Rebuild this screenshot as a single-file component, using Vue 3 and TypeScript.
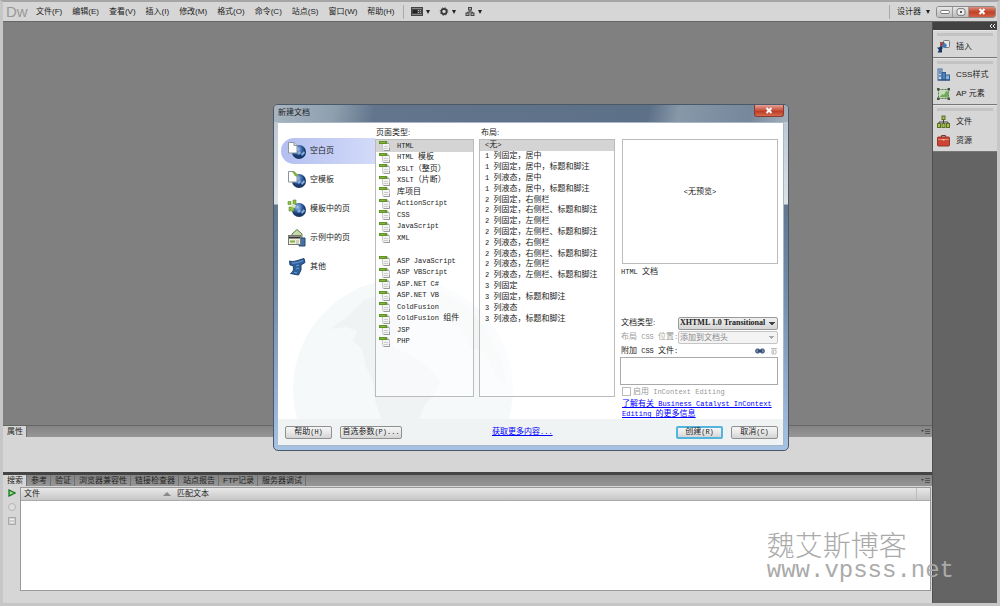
<script setup lang="ts">
import { ref, defineComponent, h } from 'vue'

// Sets half-width latin runs in a narrow monospace beside full-width characters.
const Mixed = defineComponent({
  props: { text: { type: String, required: true } },
  setup(props) {
    return () =>
      h(
        'span',
        { class: 'mixed' },
        (props.text.match(/[\x20-\x7e]+|[^\x20-\x7e]+/g) ?? []).map((run) =>
          /^[\x20-\x7e]/.test(run) ? h('span', { class: 'half' }, run) : run,
        ),
      )
  },
})

const menus = ['文件(F)', '编辑(E)', '查看(V)', '插入(I)', '修改(M)', '格式(O)', '命令(C)', '站点(S)', '窗口(W)', '帮助(H)']
const dock = [
  [{ icon: 'insert', label: '插入' }],
  [{ icon: 'css', label: 'CSS样式' }, { icon: 'ap', label: 'AP 元素' }],
  [{ icon: 'files', label: '文件' }, { icon: 'assets', label: '资源' }],
]
const categories = ['空白页', '空模板', '模板中的页', '示例中的页', '其他']
const pageTypes = [
  'HTML', 'HTML 模板', 'XSLT（整页）', 'XSLT（片断）', '库项目', 'ActionScript', 'CSS', 'JavaScript', 'XML', '',
  'ASP JavaScript', 'ASP VBScript', 'ASP.NET C#', 'ASP.NET VB', 'ColdFusion', 'ColdFusion 组件', 'JSP', 'PHP',
]
const layouts = [
  '<无>', '1 列固定，居中', '1 列固定，居中，标题和脚注', '1 列液态，居中', '1 列液态，居中，标题和脚注',
  '2 列固定，右侧栏', '2 列固定，右侧栏、标题和脚注', '2 列固定，左侧栏', '2 列固定，左侧栏、标题和脚注',
  '2 列液态，右侧栏', '2 列液态，右侧栏、标题和脚注', '2 列液态，左侧栏', '2 列液态，左侧栏、标题和脚注',
  '3 列固定', '3 列固定，标题和脚注', '3 列液态', '3 列液态，标题和脚注',
]
const resultTabs = ['搜索', '参考', '验证', '浏览器兼容性', '链接检查器', '站点报告', 'FTP记录', '服务器调试']

const category = ref(0)
const pageType = ref(0)
const layout = ref(0)
const tab = ref(0)
</script>

<template>
  <div class="app">
    <header class="menubar">
      <span class="logo">Dw</span>
      <nav class="menus">
        <button v-for="m in menus" :key="m" type="button">{{ m }}</button>
      </nav>
      <i class="sep"></i>
      <button class="tool" type="button" aria-label="布局">
        <svg width="12" height="9" viewBox="0 0 12 9"><rect width="12" height="9" fill="#444" /><path d="M1 1.500h10M1 7.500h10" stroke="#888" /><rect x="2" y="3" width="4" height="3" fill="#222" /><path d="M7 3.500h1M9 3.500h1M7 5.500h1M9 5.500h1" stroke="#bbb" /></svg>
        <i class="caret"></i>
      </button>
      <button class="tool" type="button" aria-label="扩展">
        <svg width="10" height="9" viewBox="0 0 10 9"><circle cx="5" cy="4.500" r="2.600" fill="none" stroke="#333" stroke-width="1.700" /><circle cx="5" cy="4.500" r="3.800" fill="none" stroke="#444" stroke-dasharray="1.300 1.700" /></svg>
        <i class="caret"></i>
      </button>
      <button class="tool" type="button" aria-label="站点">
        <svg width="10" height="9" viewBox="0 0 10 9" fill="#aaa" stroke="#444"><rect x="3.500" y=".5" width="3" height="2.500" /><path d="M5 3v2M2.500 6V5h5v1" fill="none" /><rect x="1" y="6" width="3" height="2.500" /><rect x="6" y="6" width="3" height="2.500" /></svg>
        <i class="caret"></i>
      </button>
      <i class="sep push"></i>
      <button class="workspace-switch" type="button">设计器 <i class="caret"></i></button>
      <div class="winctl">
        <button type="button" aria-label="最小化"><svg width="10" height="6" viewBox="0 0 10 6"><rect x=".7" y="1.500" width="8.600" height="3" rx="1" fill="#fff" stroke="#777" /></svg></button>
        <button type="button" aria-label="还原"><svg width="10" height="8" viewBox="0 0 10 8"><rect x="1" y=".7" width="8" height="6.600" rx="2" fill="#eee" stroke="#777" /><rect x="4" y="3" width="2" height="2" fill="#555" /></svg></button>
        <button type="button" class="close" aria-label="关闭"><svg width="8" height="7" viewBox="0 0 8 7"><path d="M1.500 1l5 5M6.500 1l-5 5" stroke="#fff" stroke-width="2" /></svg></button>
      </div>
    </header>

    <div class="main">
      <div class="left">
        <div class="canvas"></div>
        <section class="properties">
          <div class="tabs">
            <button class="tab on" type="button">属性</button>
            <svg class="opts" width="10" height="7" viewBox="0 0 10 7"><path d="M0 2h3L1.500 4z" fill="#444" /><path d="M4 1.500h5M4 3.500h5M4 5.500h5" stroke="#555" /></svg>
          </div>
        </section>
        <section class="results">
          <div class="tabs">
            <button v-for="(t, i) in resultTabs" :key="t" class="tab" :class="{ on: tab === i }" type="button" @click="tab = i">{{ t }}</button>
            <svg class="opts" width="10" height="7" viewBox="0 0 10 7"><path d="M0 2h3L1.500 4z" fill="#444" /><path d="M4 1.500h5M4 3.500h5M4 5.500h5" stroke="#555" /></svg>
          </div>
          <div class="result-body">
            <div class="strip">
              <button type="button" aria-label="运行"><svg width="8" height="8" viewBox="0 0 8 8"><path d="M1 1l6 3-6 3z" fill="#9adb8c" stroke="#16751b" stroke-width="1.300" /></svg></button>
              <button type="button" aria-label="停止"><svg width="8" height="8" viewBox="0 0 8 8"><circle cx="4" cy="4" r="3.500" fill="#ddd" stroke="#b5b5b5" /></svg></button>
              <button type="button" aria-label="保存"><svg width="8" height="8" viewBox="0 0 8 8"><rect x=".5" y=".5" width="7" height="7" fill="#ccc" stroke="#aaa" /><path d="M2 2.500h4M2.500 5.500h3" stroke="#f4f4f4" /></svg></button>
            </div>
            <div class="grid">
              <table>
                <thead>
                  <tr>
                    <th class="file">文件<svg width="8" height="4" viewBox="0 0 8 4"><path d="M0 4l4-4 4 4z" fill="#888" /></svg></th>
                    <th>匹配文本</th>
                    <th class="end"></th>
                  </tr>
                </thead>
              </table>
            </div>
          </div>
        </section>
      </div>

      <aside class="dock">
        <div class="dock-head"><svg width="6" height="4" viewBox="0 0 6 4"><path d="M3 0L1 2l2 2M6 0L4 2l2 2" fill="none" stroke="#eee" /></svg></div>
        <div v-for="(group, g) in dock" :key="g" class="group">
          <i class="grip"></i>
          <button v-for="p in group" :key="p.label" type="button">
            <svg width="13" height="13" viewBox="0 0 13 13">
              <g v-if="p.icon === 'insert'"><rect x="6.500" y=".5" width="6" height="7" rx="1" fill="#e8e8e8" stroke="#777" /><rect x="3.500" y="2.500" width="3.500" height="4" fill="#c8341f" stroke="#444" stroke-width=".5" /><circle cx="7.500" cy="5.500" r="2.200" fill="#3a7cc4" /><path d="M0 7.500h2L4 6l2 2-1 1v3.500H.5L2 10z" fill="#17395f" /></g>
              <g v-else-if="p.icon === 'css'"><rect x="1" y="1" width="4" height="11" fill="#c3d4ea" stroke="#426b9d" /><rect x="5" y="4.500" width="3.500" height="7.500" fill="#4c81bb" stroke="#315f93" /><rect x="8.500" y="7" width="4" height="5" fill="#8cb0d9" stroke="#315f93" /><path d="M1 12h12M2 3h2M2 5h2M2 8h2" stroke="#254b7a" /></g>
              <g v-else-if="p.icon === 'ap'"><rect x="1.500" y="2.500" width="10" height="9" fill="#c4dfb5" stroke="#666" stroke-dasharray="2 1" /><path d="M2.500 10l3-3 1.500 1 2-4 2.500 1v5.500z" fill="#71a95c" /><path d="M0 1h2.500v2.500H0zM10.500 1H13v2.500h-2.500zM0 10.500h2.500V13H0zM10.500 10.500H13V13h-2.500z" fill="#41583c" /></g>
              <g v-else-if="p.icon === 'files'" stroke="#596e28" fill="#a9bf45"><path d="M6.500 4v3M2 9V7h9v2M6.500 7v2" fill="none" stroke="#444" /><rect x="5" y="1" width="3" height="3.500" /><rect x=".5" y="8.500" width="3" height="4" /><rect x="5" y="8.500" width="3" height="4" /><rect x="9.500" y="8.500" width="3" height="4" /></g>
              <g v-else><path d="M4.500 3V1.500h4V3" fill="none" stroke="#7d342a" /><rect x=".5" y="3" width="12" height="9" rx="1" fill="#cb4434" stroke="#96352a" /><path d="M1 5.500h11" stroke="#e58672" /><path d="M5.500 5h2v1.500h-2z" fill="#f4c3ae" /></g>
            </svg>
            <span>{{ p.label }}</span>
          </button>
        </div>
      </aside>
    </div>

    <div class="dialog" role="dialog" aria-labelledby="dlg-title">
      <div class="title">
        <span id="dlg-title">新建文档</span>
        <button type="button" class="dlg-close" aria-label="关闭"><svg width="8" height="7" viewBox="0 0 8 7"><path d="M1.500 1l5 5M6.500 1l-5 5" stroke="#fff" stroke-width="2" /></svg></button>
      </div>
      <div class="panel">
        <svg class="globe" width="222" height="142" viewBox="0 0 222 142">
          <circle cx="111" cy="111" r="110" fill="#f6f9fa" />
          <path d="M38 51l18-13 16-16 25-7 3 8-12 8 3 10 14-2 5 10-10 13 2 8 12 5 22 14 12 14-7 15-9 10-6 17h-35l-8-22-2-20-7-14-4-18-9-8 4-10-11-4z" fill="#eff3f4" />
          <path d="M145 12l25 13 22 24 16 30 8 30-12-12-10-22-15-5-8-18-16-12-14-10z" fill="#f2f5f5" />
        </svg>
        <div class="body">
          <nav class="cats">
            <button v-for="(c, i) in categories" :key="c" type="button" :class="{ on: category === i }" @click="category = i">
              <svg width="20" height="20" viewBox="0 0 20 20">
                <defs><radialGradient id="ball" cx=".4" cy=".3"><stop offset="0" stop-color="#a9c8f0" /><stop offset=".6" stop-color="#3b69ad" /><stop offset="1" stop-color="#183868" /></radialGradient></defs>
                <g v-if="i < 3">
                  <circle cx="12" cy="11" r="7" fill="url(#ball)" />
                  <path d="M10 12l3-2 1 2-2 2zM14 13l3-3 1 2-3 3z" fill="#86aede" />
                  <path v-if="i < 2" d="M1.500 1.500h5.500l3 3V12H1.500z" fill="#fff" stroke="#8b949e" />
                  <path v-if="i === 0" d="M7 1.500v3h3" fill="#ddd" stroke="#8b949e" />
                  <path v-if="i === 1" d="M5 1.500h2.500L10.500 5v2L8 6z" fill="#7fb437" />
                  <path v-if="i === 2" d="M1 2.500h3v3H1zM6 1h3v4H6zM2 8h5v4H2z" fill="#8fc14a" stroke="#5c8c2b" stroke-width=".6" />
                  <path v-if="i === 2" d="M4 5l5 1-1 3-4-1z" fill="#d7ebb8" />
                </g>
                <g v-else-if="i === 3">
                  <path d="M5 6l5-4.500 5 4.500v6H5z" fill="#c6dca8" stroke="#607a48" />
                  <path d="M13 10h5v8h-6z" fill="#4471a8" stroke="#254974" />
                  <rect x="1.500" y="7.500" width="12" height="9" fill="#f0efd9" stroke="#777" /><path d="M2 9.500h11" stroke="#333" stroke-width="2" /><path d="M3 12.500h5v2H3z" fill="#84ad4b" /><path d="M9 13h3M9 15h3" stroke="#aaa" />
                </g>
                <g v-else>
                  <path d="M2.500 4c4 1.500 9-1 14.500-2.500l1 4-4 2.500v5l-2.500 5-8-1.500c3-2 3.500-4 2.500-8L3 8z" fill="#2f609e" stroke="#1e426f" /><path d="M5 6c4 .5 7-1 11-2.500M9 9l3-1M9 12l3-1M7 15.500l3 .5" stroke="#6f9cd2" fill="none" />
                </g>
              </svg>
              <span>{{ c }}</span>
            </button>
          </nav>

          <div class="col types">
            <div class="caption">页面类型:</div>
            <div class="box">
              <ul class="list type-list">
                <li v-for="(t, i) in pageTypes" :key="i" :class="{ on: pageType === i }" @click="pageType = i">
                  <template v-if="t">
                    <svg width="12" height="11" viewBox="0 0 12 11"><path d="M3 2h5l2.500 1.500v7H4z" fill="#f4f4f4" stroke="#c4c4c4" /><path d="M5 6.500h4M5 8.500h4" stroke="#ccc" /><path d="M5 10.500h5.500V8" fill="none" stroke="#999" /><rect y="1" width="8" height="3" fill="#5f9420" /><path d="M1 2.500h5" stroke="#86b440" /><path d="M8 1.500v2h2" fill="#ddd" stroke="#888" stroke-width=".7" /></svg>
                    <Mixed :text="t" />
                  </template>
                </li>
              </ul>
            </div>
          </div>

          <div class="col layouts">
            <div class="caption">布局:</div>
            <div class="box">
              <ul class="list layout-list">
                <li v-for="(l, i) in layouts" :key="l" :class="{ on: layout === i }" @click="layout = i"><Mixed :text="l" /></li>
              </ul>
            </div>
          </div>

          <div class="detail">
            <div class="preview"><Mixed text="<无预览>" /></div>
            <p class="desc"><Mixed text="HTML 文档" /></p>
            <div class="field">
              <label for="doctype">文档类型:</label>
              <select id="doctype" class="latin"><option>XHTML 1.0 Transitional</option></select>
            </div>
            <div class="field off">
              <label for="csspos"><Mixed text="布局 CSS 位置:" /></label>
              <select id="csspos" disabled><option>添加到文档头</option></select>
            </div>
            <div class="attach">
              <label for="cssfiles"><Mixed text="附加 CSS 文件:" /></label>
              <button type="button" aria-label="附加样式表"><svg width="10" height="6" viewBox="0 0 10 6"><rect x=".7" y="1" width="4" height="4" rx="1.500" fill="#7289a8" stroke="#304e75" /><rect x="5.300" y="1" width="4" height="4" rx="1.500" fill="#7289a8" stroke="#304e75" /><path d="M3 3h4" stroke="#223e63" stroke-width="1.500" /></svg></button>
              <button type="button" disabled aria-label="移除"><svg width="8" height="8" viewBox="0 0 8 8"><path d="M1 1.500h6M2 3h4v4H2zM3.500 3.500v3" fill="none" stroke="#bbb" /></svg></button>
            </div>
            <textarea id="cssfiles"></textarea>
            <label class="check"><input type="checkbox" disabled /><Mixed text="启用 InContext Editing" /></label>
            <a class="more" href="#"><Mixed text="了解有关 Business Catalyst InContext Editing 的更多信息" /></a>
          </div>
        </div>
        <footer class="actions">
          <button type="button"><Mixed text="帮助(H)" /></button>
          <button type="button" class="wide"><Mixed text="首选参数(P)..." /></button>
          <a href="#"><Mixed text="获取更多内容..." /></a>
          <button type="button" class="primary"><Mixed text="创建(R)" /></button>
          <button type="button"><Mixed text="取消(C)" /></button>
        </footer>
      </div>
    </div>

    <div class="watermark"><span>魏艾斯博客</span><span class="url">www.vpsss.net</span></div>
  </div>
</template>

<style>
html,
body {
  margin: 0;
}
.mixed .half {
  font-family: "Liberation Mono", monospace;
  font-size: 7px;
}
</style>

<style scoped>
* {
  box-sizing: border-box;
}
.app {
  position: relative;
  display: flex;
  flex-direction: column;
  min-height: 100vh;
  border: solid #c6c6c6;
  border-width: 2px 3px 3px;
  border-top-color: #a5a5a5;
  background: #d6d6d6;
  color: #222;
  font: 8px/10px "Liberation Sans", "Noto Sans CJK SC", sans-serif;
  overflow: hidden;
}
button {
  display: flex;
  align-items: center;
  justify-content: center;
  margin: 0;
  padding: 0;
  border: 0;
  background: none;
  color: inherit;
  font: inherit;
  white-space: nowrap;
}
svg {
  display: block;
  flex: none;
}
.menubar {
  display: flex;
  align-items: center;
  height: 20px;
  padding: 0 1px 0 3px;
  border-bottom: 1px solid #666;
}
.logo {
  width: 30px;
  color: #999;
  font-size: 15px;
  line-height: 17px;
}
.menus {
  display: flex;
  gap: 10px;
}
.sep {
  width: 1px;
  height: 14px;
  margin: 0 7px 0 9px;
  background: #aaa;
}
.push {
  margin-left: auto;
}
.tool {
  gap: 3px;
  margin-right: 9px;
}
.caret {
  width: 0;
  height: 0;
  border: solid transparent;
  border-width: 4px 2px 0;
  border-top-color: #222;
}
.workspace-switch {
  gap: 5px;
}
.winctl {
  display: flex;
  margin-left: 6px;
  border: 1px solid #8b8b8b;
  border-radius: 3px;
  overflow: hidden;
}
.winctl button {
  width: 16px;
  height: 10px;
  border-right: 1px solid #999;
  background: linear-gradient(#e6e6e6, #bcbcbc);
}
.winctl .close {
  width: 26px;
  border: 0;
  background: linear-gradient(#dc8e7e, #c24127 50%, #d06048);
}
.main {
  display: flex;
  flex: 1;
}
.left {
  display: flex;
  flex: 1;
  flex-direction: column;
  min-width: 0;
}
.canvas {
  flex: 1;
  background: #808080;
}
.tabs {
  display: flex;
  height: 11px;
  background: linear-gradient(#848484, #969696);
}
.tab {
  padding: 0 3px 0 4px;
  border-right: 1px solid #707070;
}
.tab.on {
  background: #d6d6d6;
}
.opts {
  margin: 2px 1px 0 auto;
}
.properties {
  height: 47px;
  border-top: 1px solid #666;
}
.results {
  display: flex;
  flex-direction: column;
  height: 131px;
  border-top: 3px solid #444;
}
.result-body {
  display: flex;
  flex: 1;
  padding: 1px 1px 12px 0;
}
.strip {
  display: flex;
  flex-direction: column;
  gap: 6px;
  width: 17px;
  padding: 2px 4px;
}
.grid {
  flex: 1;
  border: 1px solid #999;
  background: #fff;
}
table {
  width: 100%;
  border-collapse: collapse;
  table-layout: fixed;
}
th {
  height: 12px;
  padding: 0 3px;
  border-bottom: 1px solid #aaa;
  background: linear-gradient(#e8e8e8, #c6c6c6);
  font-weight: 400;
  text-align: left;
}
.file {
  width: 153px;
}
.file svg {
  float: right;
  margin-top: 3px;
}
.end {
  width: 14px;
  border-left: 1px solid #bbb;
}
.dock {
  width: 65px;
  border-left: 1px solid #505050;
  background: #646464;
}
.dock-head {
  display: flex;
  align-items: center;
  justify-content: flex-end;
  height: 8px;
  padding-right: 2px;
  background: #424242;
}
.group {
  padding: 2px 4px 1px;
  border-top: 1px solid #e4e4e4;
  border-bottom: 1px solid #777;
  background: #d6d6d6;
}
.grip {
  display: block;
  height: 3px;
  margin-bottom: 1px;
  background: #c3c3c3;
}
.group button {
  gap: 6px;
  height: 19px;
}
.dialog {
  position: absolute;
  top: 102px;
  left: 270px;
  width: 516px;
  padding: 0 4px 4px;
  border: 1px solid #4b5867;
  border-radius: 5px;
  background: linear-gradient(#b7c3ce 0, #dce3e8 99px, #60778f 100px, #718aa8 180px, #a6c2e4);
  font-family: "Liberation Serif", "Noto Sans CJK SC", serif;
}
.title {
  display: flex;
  align-items: flex-start;
  justify-content: space-between;
  height: 17px;
  margin: 0 -4px;
  padding: 0 4px;
  border-radius: 4px 4px 0 0;
  background: linear-gradient(100deg, #a8b5c1 0, #8e9fae 60px, #62758c 100px, #5c7087 370px, #8798a9 400px, #75879b 470px, #a5b1bc);
}
.title span {
  padding-top: 3px;
}
.dlg-close {
  width: 30px;
  height: 12px;
  border: 1px solid #863c32;
  border-top: 0;
  border-radius: 0 0 3px 3px;
  background: linear-gradient(#e3a397, #c84d39 50%, #b93420 51%, #d46a4c);
}
.panel {
  position: relative;
  border: 1px solid #a9b7c6;
  border-width: 1px 1px 1px 0;
  background: #fff;
}
.globe {
  position: absolute;
  bottom: 25px;
  left: 14px;
}
.body {
  position: relative;
  display: flex;
  gap: 5px;
  padding: 5px 5px 0 3px;
}
.cats {
  display: flex;
  flex-direction: column;
  gap: 3px;
  width: 94px;
  margin-right: -5px;
  padding-top: 10px;
}
.cats button {
  gap: 3px;
  justify-content: flex-start;
  height: 26px;
  padding-left: 6px;
  border-radius: 13px 0 0 13px;
}
.cats .on {
  background: linear-gradient(90deg, #b3bff0, #d3dbf9);
}
.caption {
  height: 11px;
  padding-left: 1px;
  line-height: 9px;
}
.layouts .caption {
  padding-left: 2px;
}
.types {
  width: 99px;
}
.layouts {
  width: 136px;
}
.box {
  height: 258px;
  border: 1px solid #bbb;
  background: rgba(255, 255, 255, 0.5);
}
.list {
  display: grid;
  grid-auto-rows: 1fr;
  margin: 0;
  padding: 0;
  list-style: none;
}
.type-list {
  height: 207px;
}
.layout-list {
  height: 184px;
}
.list li {
  display: flex;
  align-items: center;
  min-height: 0;
  padding-left: 5px;
  line-height: 8px;
  white-space: nowrap;
}
.type-list li {
  gap: 6px;
  padding-left: 3px;
}
.list .on {
  background: #d4d4d4;
}
.detail {
  display: flex;
  flex: 1;
  flex-direction: column;
  min-width: 0;
  padding-top: 11px;
}
.preview {
  display: flex;
  align-items: center;
  justify-content: center;
  height: 125px;
  margin-left: 2px;
  padding-bottom: 20px;
  border: 1px solid #bbb;
}
.desc {
  margin: 3px 0 39px 1px;
}
.field {
  display: flex;
  align-items: center;
  height: 14px;
  padding-left: 1px;
}
.field label {
  width: 57px;
  white-space: nowrap;
}
.off,
.check {
  color: #999;
}
select {
  flex: 1;
  min-width: 0;
  height: 13px;
  margin: 0;
  padding: 0 1px;
  appearance: none;
  border: 1px solid #999;
  border-radius: 2px;
  background: linear-gradient(45deg, transparent 50%, #222 50%) right 5px center / 3px 3px no-repeat,
    linear-gradient(-45deg, transparent 50%, #222 50%) right 2px center / 3px 3px no-repeat,
    linear-gradient(#f1f1f1, #d5d5d5);
  background: conic-gradient(from -45deg at 50% 100%, #222 90deg, transparent 0) right 2px center / 6px 3px no-repeat,
    linear-gradient(#f1f1f1, #d5d5d5);
  color: #222;
  font: 8px/10px "Noto Sans CJK SC", sans-serif;
}
select,
select:disabled {
  background: linear-gradient(to bottom left, #444 50%, transparent 50%) right 2px center / 3px 3px no-repeat,
    linear-gradient(to bottom right, #444 50%, transparent 50%) right 2px center / 3px 3px no-repeat,
    linear-gradient(#f1f1f1, #d5d5d5);
  background-position: right 5px center, right 2px center, 0 0;
}
.latin {
  font: bold 8px/10px "Liberation Serif", serif;
}
select:disabled {
  border-color: #c5c5c5;
  background-image: linear-gradient(to bottom left, #aaa 50%, transparent 50%),
    linear-gradient(to bottom right, #aaa 50%, transparent 50%), linear-gradient(#f3f3f3, #f3f3f3);
  color: #888;
  opacity: 1;
}
.attach {
  display: flex;
  align-items: center;
  gap: 5px;
  height: 13px;
  padding-left: 1px;
}
.attach label {
  margin-right: auto;
}
textarea {
  height: 28px;
  margin: 0;
  border: 1px solid #aaa;
  background: #fff;
  resize: none;
}
.check {
  display: flex;
  align-items: center;
  gap: 2px;
  height: 13px;
  padding-left: 2px;
}
.check input {
  width: 9px;
  height: 9px;
  margin: 0;
  appearance: none;
  border: 1px solid #bbb;
  background: #fff;
}
a {
  color: #00f;
}
.more {
  margin: 1px 0 0 2px;
  line-height: 9px;
}
.actions {
  position: relative;
  display: flex;
  align-items: center;
  gap: 8px;
  height: 26px;
  padding: 0 5px 0 7px;
  background: #f0f3f4;
}
.actions button {
  width: 47px;
  height: 13px;
  border: 1px solid #909090;
  border-radius: 2px;
  background: linear-gradient(#f5f5f5, #e8e8e8 50%, #d4d4d4);
}
.actions .wide {
  width: 62px;
}
.actions a {
  margin: 0 auto 0 82px;
}
.actions .primary {
  border: 2px solid #53b4dc;
}
.watermark {
  position: absolute;
  right: 43px;
  bottom: 22px;
  display: flex;
  flex-direction: column;
  color: #aaa;
  font: 28px/24px "Liberation Mono", "Noto Sans CJK SC", monospace;
  font-weight: 300;
  pointer-events: none;
}
.watermark .url {
  font-size: 24px;
  line-height: 20px;
}
</style>
